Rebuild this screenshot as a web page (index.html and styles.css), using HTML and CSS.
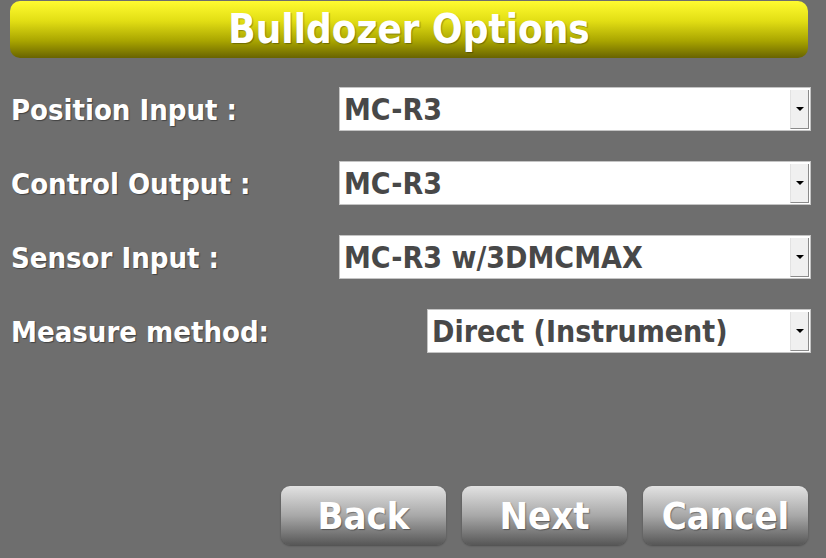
FILE: index.html
```html
<!DOCTYPE html>
<html lang="en">
<head>
    <meta charset="UTF-8">
    <meta name="viewport" content="width=device-width, initial-scale=1.0">
    <title>Bulldozer Options</title>
    <link rel="stylesheet" href="styles.css">
</head>
<body>
    <div class="screen">
        <h1 class="title-bar">Bulldozer Options</h1>

        <div class="options">
            <div class="row">
                <label class="label">Position Input :</label>
                <div class="select">
                    <span class="value">MC-R3</span>
                    <span class="arrow"></span>
                </div>
            </div>

            <div class="row">
                <label class="label">Control Output :</label>
                <div class="select">
                    <span class="value">MC-R3</span>
                    <span class="arrow"></span>
                </div>
            </div>

            <div class="row">
                <label class="label">Sensor Input :</label>
                <div class="select">
                    <span class="value">MC-R3 w/3DMCMAX</span>
                    <span class="arrow"></span>
                </div>
            </div>

            <div class="row">
                <label class="label">Measure method:</label>
                <div class="select short">
                    <span class="value">Direct (Instrument)</span>
                    <span class="arrow"></span>
                </div>
            </div>
        </div>

        <div class="actions">
            <button type="button" class="btn">Back</button>
            <button type="button" class="btn">Next</button>
            <button type="button" class="btn">Cancel</button>
        </div>
    </div>
</body>
</html>
```

FILE: styles.css
```css
body {
    margin: 0;
    padding: 0;
    background-color: #6e6e6e;
    font-family: "DejaVu Sans Condensed", "DejaVu Sans", sans-serif;
    font-stretch: condensed;
}

.screen {
    width: 826px;
    height: 558px;
    display: flex;
    flex-direction: column;
}

.title-bar {
    margin: 1px 18px 0 10px;
    height: 57px;
    line-height: 57px;
    text-align: center;
    color: #fff;
    font-size: 40px;
    font-weight: bold;
    border-radius: 10px;
    background: linear-gradient(to bottom, #fffb30 0%, #e2de14 35%, #a9a500 70%, #686300 100%);
    text-shadow: 1px 1px 1px rgba(0, 0, 0, 0.3);
}

.options {
    display: flex;
    flex-direction: column;
    gap: 30px;
    padding: 29px 15px 0 11px;
}

.row {
    display: flex;
    align-items: center;
    height: 44px;
}

.label {
    flex: 1;
    color: #fff;
    font-size: 29px;
    font-weight: bold;
    padding-top: 2px;
    text-shadow: 1px 1px 1px rgba(0, 0, 0, 0.4);
}

.select {
    width: 472px;
    height: 44px;
    box-sizing: border-box;
    display: flex;
    align-items: center;
    background-color: #fff;
    border: 1px solid #c4c4c4;
    padding: 1px 1px 1px 4px;
}

.select.short {
    width: 384px;
}

.value {
    flex: 1;
    color: #484848;
    font-size: 30px;
    font-weight: bold;
    white-space: nowrap;
}

.arrow {
    width: 19px;
    height: 39px;
    box-sizing: border-box;
    background-color: #f0f0f0;
    border-left: 1px solid #e2e2e2;
    border-right: 1px solid #8a8a8a;
    border-bottom: 1px solid #8a8a8a;
    display: flex;
    align-items: center;
    justify-content: center;
}

.arrow::after {
    content: "";
    border-left: 4px solid transparent;
    border-right: 4px solid transparent;
    border-top: 4px solid #000;
}

.actions {
    margin-top: auto;
    display: flex;
    justify-content: flex-end;
    gap: 16px;
    padding: 0 18px 13px 0;
}

.btn {
    width: 165px;
    height: 59px;
    border: none;
    border-radius: 9px;
    color: #fff;
    font-family: inherit;
    font-stretch: condensed;
    font-size: 38px;
    font-weight: bold;
    background: linear-gradient(to bottom, #e2e2e2 0%, #a8a8a8 50%, #575757 100%);
    text-shadow: 1px 1px 1px rgba(0, 0, 0, 0.35);
    box-shadow: 0 1px 2px rgba(0, 0, 0, 0.3);
    cursor: pointer;
}
```
